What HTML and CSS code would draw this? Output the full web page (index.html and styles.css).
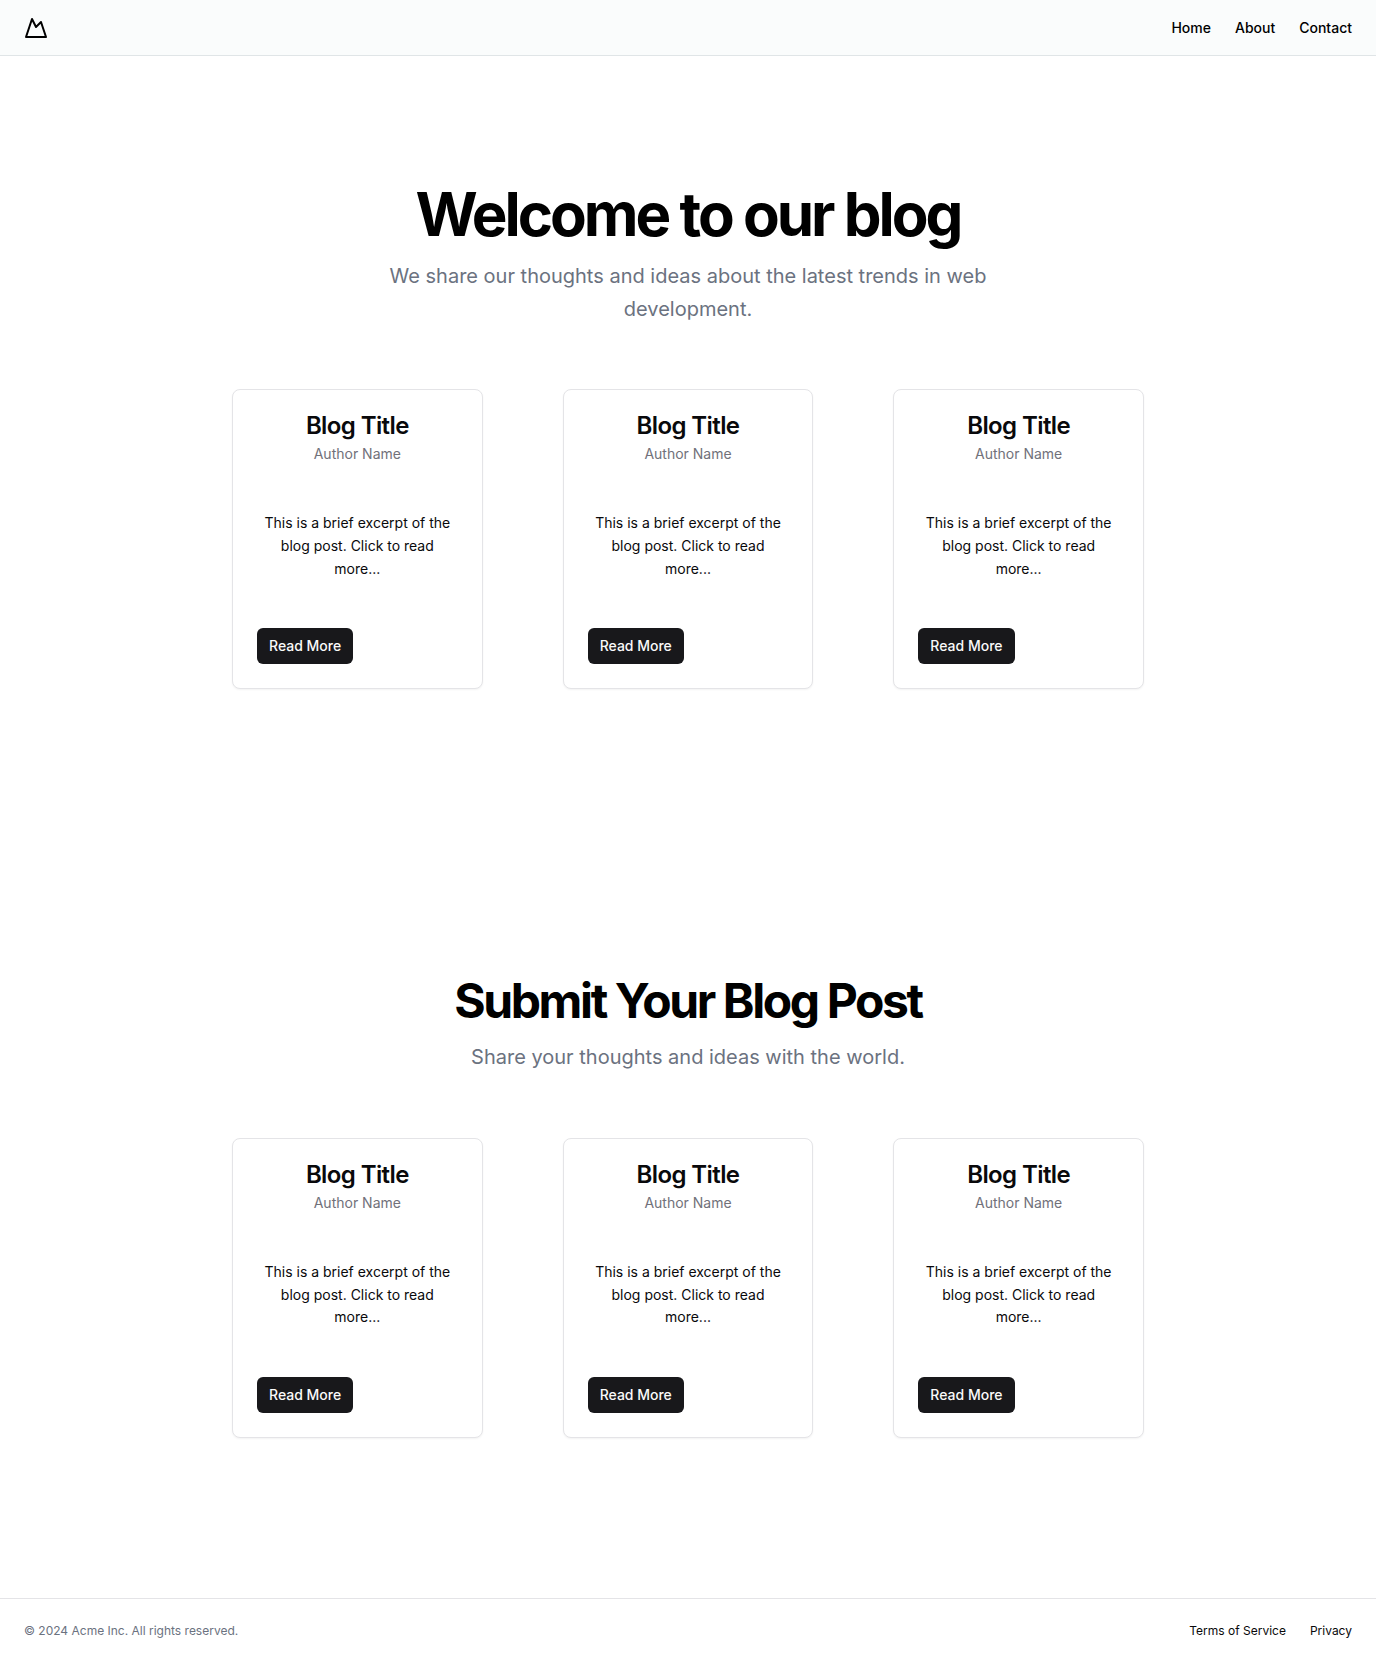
FILE: index.html
```html
<!DOCTYPE html>
<html lang="en">
<head>
<meta charset="utf-8">
<meta name="viewport" content="width=device-width, initial-scale=1">
<title>Acme Blog</title>
<link rel="stylesheet" href="styles.css">
</head>
<body>
<header class="site-header">
  <a class="logo" href="#" aria-label="Acme Inc">
    <svg width="24" height="24" viewBox="0 0 24 24" fill="none" stroke="currentColor" stroke-width="2" stroke-linecap="round" stroke-linejoin="round" aria-hidden="true"><path d="m8 3 4 8 5-5 5 15H2L8 3z"/></svg>
  </a>
  <nav class="site-nav">
    <a href="#">Home</a>
    <a href="#">About</a>
    <a href="#">Contact</a>
  </nav>
</header>
<main>
  <section class="section">
    <div class="intro">
      <h1 class="title">Welcome to our blog</h1>
      <p class="lead">We share our thoughts and ideas about the latest trends in web development.</p>
    </div>
    <div class="cards">
      <article class="card">
        <div class="card-header"><h3 class="card-title">Blog Title</h3><p class="card-author">Author Name</p></div>
        <p class="card-text">This is a brief excerpt of the blog post. Click to read more...</p>
        <button class="button" type="button">Read More</button>
      </article>
      <article class="card">
        <div class="card-header"><h3 class="card-title">Blog Title</h3><p class="card-author">Author Name</p></div>
        <p class="card-text">This is a brief excerpt of the blog post. Click to read more...</p>
        <button class="button" type="button">Read More</button>
      </article>
      <article class="card">
        <div class="card-header"><h3 class="card-title">Blog Title</h3><p class="card-author">Author Name</p></div>
        <p class="card-text">This is a brief excerpt of the blog post. Click to read more...</p>
        <button class="button" type="button">Read More</button>
      </article>
    </div>
  </section>
  <section class="section">
    <div class="intro">
      <h2 class="title title-small">Submit Your Blog Post</h2>
      <p class="lead">Share your thoughts and ideas with the world.</p>
    </div>
    <div class="cards">
      <article class="card">
        <div class="card-header"><h3 class="card-title">Blog Title</h3><p class="card-author">Author Name</p></div>
        <p class="card-text">This is a brief excerpt of the blog post. Click to read more...</p>
        <button class="button" type="button">Read More</button>
      </article>
      <article class="card">
        <div class="card-header"><h3 class="card-title">Blog Title</h3><p class="card-author">Author Name</p></div>
        <p class="card-text">This is a brief excerpt of the blog post. Click to read more...</p>
        <button class="button" type="button">Read More</button>
      </article>
      <article class="card">
        <div class="card-header"><h3 class="card-title">Blog Title</h3><p class="card-author">Author Name</p></div>
        <p class="card-text">This is a brief excerpt of the blog post. Click to read more...</p>
        <button class="button" type="button">Read More</button>
      </article>
    </div>
  </section>
</main>
<footer class="site-footer">
  <p class="copyright">© 2024 Acme Inc. All rights reserved.</p>
  <nav class="footer-nav">
    <a href="#">Terms of Service</a>
    <a href="#">Privacy</a>
  </nav>
</footer>
</body>
</html>
```
FILE: styles.css
```css
*, *::before, *::after {
  box-sizing: border-box;
}

body, h1, h2, h3, p {
  margin: 0;
}

body {
  min-height: 100vh;
  display: flex;
  flex-direction: column;
  background: #fff;
  color: #09090b;
  font-family: Inter, "Liberation Sans", sans-serif;
  font-size: 16px;
  line-height: 24px;
}

main {
  flex: 1;
}

a {
  color: inherit;
  text-decoration: none;
}

.site-header {
  display: flex;
  align-items: center;
  justify-content: space-between;
  height: 56px;
  padding: 0 24px;
  background: #fafcfc;
  border-bottom: 1px solid #e0e5e7;
  color: #000;
}

.logo {
  display: flex;
}

.site-nav {
  display: flex;
  gap: 24px;
  font-size: 14px;
  font-weight: 500;
  line-height: 20px;
}

.section {
  padding: 128px 24px 160px;
}

.intro {
  display: flex;
  flex-direction: column;
  align-items: center;
  gap: 16px;
  margin-bottom: 64px;
  text-align: center;
}

.title {
  color: #000;
  font-size: 60px;
  font-weight: 700;
  line-height: 1;
  letter-spacing: -0.05em;
}

.title-small {
  font-size: 48px;
}

.lead {
  max-width: 700px;
  color: #6b7280;
  font-size: 20px;
  line-height: 1.625;
}

.cards {
  display: grid;
  grid-template-columns: repeat(3, 1fr);
  gap: 80px;
  max-width: 912px;
  margin: 0 auto;
}

.card {
  display: flex;
  flex-direction: column;
  align-items: stretch;
  gap: 48px;
  padding: 24px;
  background: #fff;
  border: 1px solid #e4e4e7;
  border-radius: 8px;
  box-shadow: 0 1px 2px rgba(0, 0, 0, 0.05);
  text-align: center;
}

.card-header {
  display: flex;
  flex-direction: column;
  gap: 6px;
}

.card-title {
  font-size: 24px;
  font-weight: 600;
  line-height: 1;
  letter-spacing: -0.025em;
}

.card-author {
  color: #71717a;
  font-size: 14px;
  line-height: 20px;
}

.card-text {
  font-size: 14px;
  line-height: 1.625;
}

.button {
  align-self: flex-start;
  height: 36px;
  padding: 0 12px;
  background: #18181b;
  border: 0;
  border-radius: 6px;
  color: #fafafa;
  font-family: inherit;
  font-size: 14px;
  font-weight: 500;
  line-height: 20px;
}

.site-footer {
  display: flex;
  align-items: center;
  justify-content: space-between;
  padding: 24px;
  border-top: 1px solid #e4e4e7;
  font-size: 12px;
  line-height: 16px;
}

.copyright {
  color: #6b7280;
}

.footer-nav {
  display: flex;
  gap: 24px;
}

@media (max-width: 860px) {
  .cards {
    grid-template-columns: 1fr;
    gap: 32px;
    max-width: 320px;
  }
}
```
